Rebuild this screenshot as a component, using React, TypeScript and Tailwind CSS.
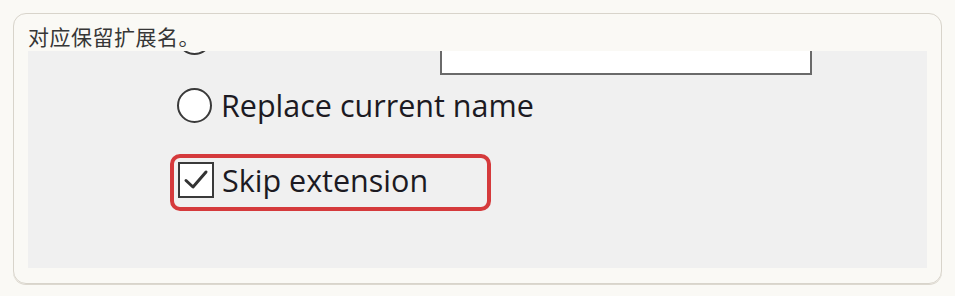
export default function App() {
  return (
    <div className="w-[955px] h-[296px] bg-[#faf9f5] pt-[13px] px-[13px] font-['Noto_Sans','Noto_Sans_CJK_SC',sans-serif]">
      <div className="h-[271px] rounded-[13px] border-[1.5px] border-[#d8d4cb] shadow-[0_1px_0_#dcd8cf] px-[14px] pt-[7px]">
        <p className="h-[30px] text-[21px] leading-[30px] text-[#363636] font-['Noto_Sans_CJK_SC',sans-serif] tracking-[0.5px]">
          对应保留扩展名。
        </p>

        <div className="h-[217px] w-[899px] overflow-hidden bg-[#f0f0f0] pl-[149px]">
          {/* 上方被裁掉的一行 */}
          <div className="-mt-[40px] flex h-[64px] items-start">
            <span className="mt-[9px] block h-[35px] w-[35px] rounded-full border-[2.5px] border-[#3a3a3a] bg-white" />
            <div className="ml-[228px] h-[64px] w-[372px] border-[2px] border-[#6a6a6a] bg-white" />
          </div>

          <div className="mt-[13px] flex h-[35px] items-center gap-[9px]">
            <span className="block h-[35px] w-[35px] shrink-0 rounded-full border-[2.5px] border-[#3a3a3a] bg-white" />
            <span className="text-[30.5px] font-medium leading-none text-[#1c1a22] font-['Open_Sans',sans-serif]">
              Replace current name
            </span>
          </div>

          <div className="-ml-[7px] mt-[31px] flex h-[57px] w-[321px] items-start gap-[8px] rounded-[10px] border-[4px] border-[#d53a3c] pl-[4px] pt-[4px]">
            <span className="flex h-[36px] w-[36px] shrink-0 items-center justify-center border-[2.5px] border-[#3a3a3a] bg-white">
              <svg width="28" height="28" viewBox="0 0 28 28" fill="none">
                <path d="M4 14.5 L11 21 L24 6" stroke="#333" strokeWidth="3" strokeLinecap="round" strokeLinejoin="round" />
              </svg>
            </span>
            <span className="text-[30.5px] font-medium leading-[36px] text-[#1c1a22] font-['Open_Sans',sans-serif]">
              Skip extension
            </span>
          </div>
        </div>
      </div>
    </div>
  );
}
